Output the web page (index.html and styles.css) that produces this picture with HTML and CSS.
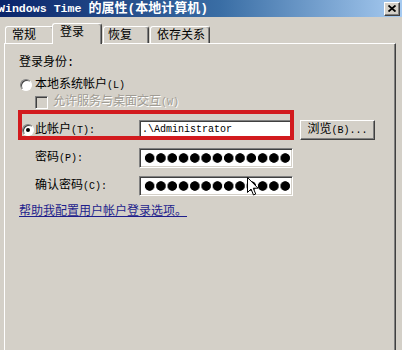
FILE: index.html
```html
<!DOCTYPE html>
<html lang="zh-CN">

<head>
    <meta charset="UTF-8">
    <meta name="viewport" content="width=device-width, initial-scale=1.0">
    <title>Windows Time 的属性(本地计算机)</title>
    <link rel="stylesheet" href="styles.css">
</head>

<body>
    <div class="dialog">
        <div class="title_bar">
            <span class="title_text"><span class="title_latin">Windows Time </span>的属性(本地计算机)</span>
            <button class="close_btn">
                <svg width="8" height="7" viewBox="0 0 8 7">
                    <path d="M0.5 0.5 L7.5 6.5 M7.5 0.5 L0.5 6.5" stroke="#000" stroke-width="1.8" fill="none" />
                </svg>
            </button>
        </div>

        <div class="tab_strip">
            <div class="tab tab_general">常规</div>
            <div class="tab tab_active">登录</div>
            <div class="tab tab_recovery">恢复</div>
            <div class="tab tab_depend">依存关系</div>
        </div>

        <div class="tab_panel">
            <div class="logon_title">登录身份:</div>

            <div class="option_row">
                <span class="radio_cell"><span class="radio"></span></span>
                <span class="option_label">本地系统帐户<span class="latin">(L)</span></span>
            </div>

            <div class="option_row sub_option">
                <span class="checkbox"></span>
                <span class="disabled_label">允许服务与桌面交互<span class="latin">(W)</span></span>
            </div>

            <div class="field_row account_row">
                <span class="radio_cell"><span class="radio radio_checked"></span></span>
                <span class="field_label">此帐户<span class="latin">(T):</span></span>
                <div class="text_field">.\Administrator</div>
                <button class="browse_btn">浏览<span class="latin">(B)...</span></button>
                <!-- red annotation frame drawn over the row -->
                <div class="highlight_box"></div>
            </div>

            <div class="field_row">
                <span class="radio_cell"></span>
                <span class="field_label">密码<span class="latin">(P):</span></span>
                <div class="text_field password_field"></div>
            </div>

            <div class="field_row">
                <span class="radio_cell"></span>
                <span class="field_label">确认密码<span class="latin">(C):</span></span>
                <div class="text_field password_field">
                    <svg class="mouse_cursor" width="12" height="19" viewBox="0 0 12 19">
                        <path d="M0.5 0.5 L0.5 15.5 L4 12 L6.5 18 L8.7 17 L6.3 11.2 L11 11.2 Z" fill="#fff" stroke="#000" stroke-width="1" />
                    </svg>
                </div>
            </div>

            <a class="help_link" href="#">帮助我配置用户帐户登录选项。</a>
        </div>
    </div>
</body>

</html>
```

FILE: styles.css
```css
body,
html {
    margin: 0;
    width: 100%;
    height: 100%;
    overflow: hidden;
    background-color: #d4d0c8;
}

body {
    font-family: "Liberation Mono", "Noto Sans CJK SC", monospace;
    font-size: 12px;
    color: #000000;
}

.dialog {
    width: 402px;
    height: 350px;
    overflow: hidden;
    background-color: #d4d0c8;
}

.latin {
    font-family: "Liberation Mono", monospace;
    font-size: 10px;
}

/* title bar */
.title_bar {
    height: 17px;
    display: flex;
    align-items: center;
    justify-content: space-between;
    background: linear-gradient(to right, #0a246a 0%, #3a6ea5 55%, #a6caf0 100%);
}

.title_text {
    margin-left: -2px;
    color: #ffffff;
    font-weight: bold;
    font-size: 13px;
    line-height: 14px;
    white-space: nowrap;
}

.title_latin {
    font-size: 11.6px;
}

.close_btn {
    width: 16px;
    height: 14px;
    margin-right: 2px;
    padding: 0;
    display: flex;
    align-items: center;
    justify-content: center;
    background-color: #d4d0c8;
    border: 1px solid;
    border-color: #ffffff #404040 #404040 #ffffff;
    box-shadow: inset -1px -1px #808080;
}

/* tabs */
.tab_strip {
    height: 26px;
    display: flex;
    align-items: flex-end;
    padding-left: 5px;
}

.tab {
    box-sizing: border-box;
    height: 17px;
    padding: 1px 0 0 6px;
    line-height: 16px;
    border-top: 1px solid #ffffff;
    border-left: 1px solid #ffffff;
    border-right: 1px solid #404040;
    border-radius: 3px 3px 0 0;
    box-shadow: inset -1px 0 #808080;
    background-color: #d4d0c8;
}

.tab_general {
    width: 49px;
}

.tab_active {
    position: relative;
    z-index: 1;
    width: 50px;
    height: 21px;
    margin: 0 0 -1px -2px;
    padding: 0 0 0 7px;
    line-height: 18px;
}

.tab_recovery {
    width: 46px;
    margin-left: 1px;
    padding-left: 4px;
}

.tab_depend {
    width: 60px;
    margin-left: 1px;
}

/* panel */
.tab_panel {
    width: 392px;
    height: 320px;
    margin-left: 4px;
    box-sizing: border-box;
    padding: 12px 0 0 14px;
    border-top: 1px solid #ffffff;
    border-left: 1px solid #ffffff;
    border-right: 1px solid #404040;
    box-shadow: inset -1px 0 #808080;
    display: flex;
    flex-direction: column;
    align-items: flex-start;
}

.logon_title {
    height: 14px;
    line-height: 14px;
}

.option_row {
    height: 14px;
    margin-top: 8px;
    display: flex;
    align-items: center;
    line-height: 14px;
}

.sub_option {
    margin-top: 3px;
}

.radio_cell {
    width: 16px;
    display: flex;
    align-items: center;
    flex-shrink: 0;
}

.radio {
    box-sizing: border-box;
    width: 12px;
    height: 12px;
    margin-left: 1px;
    border-radius: 50%;
    background-color: #ffffff;
    border: 1px solid;
    border-color: #808080 #ffffff #ffffff #808080;
    box-shadow: inset 1px 1px #404040;
    position: relative;
}

.radio_checked {
    margin-left: 3px;
}

.radio_checked::after {
    content: "";
    position: absolute;
    left: 3px;
    top: 3px;
    width: 4px;
    height: 4px;
    border-radius: 50%;
    background-color: #000000;
}

.checkbox {
    box-sizing: border-box;
    width: 13px;
    height: 13px;
    margin-left: 16px;
    background-color: #d4d0c8;
    border: 1px solid;
    border-color: #808080 #ffffff #ffffff #808080;
    box-shadow: inset 1px 1px #404040;
}

.disabled_label {
    margin-left: 5px;
    color: #a09c94;
    text-shadow: 1px 1px #ffffff;
}

/* account fields */
.field_row {
    position: relative;
    height: 20px;
    margin-top: 8px;
    display: flex;
    align-items: center;
}

.account_row {
    margin-top: 11px;
}

.field_label {
    width: 104px;
    flex-shrink: 0;
    line-height: 14px;
}

.text_field {
    position: relative;
    box-sizing: border-box;
    width: 154px;
    height: 20px;
    padding-left: 2px;
    font-family: "Liberation Mono", monospace;
    font-size: 10px;
    line-height: 18px;
    background-color: #ffffff;
    border: 1px solid;
    border-color: #808080 #ffffff #ffffff #808080;
    box-shadow: inset 1px 1px #404040, inset -1px -1px #d4d0c8;
}

.password_field {
    padding-left: 4px;
    background-image: radial-gradient(circle at center, #000000 4.4px, transparent 5.1px), linear-gradient(#ffffff, #ffffff);
    background-size: 11.3px 12px, auto;
    background-position: 0 center, 0 0;
    background-repeat: repeat-x, no-repeat;
    background-origin: content-box, padding-box;
    background-clip: content-box, padding-box;
}

.mouse_cursor {
    position: absolute;
    left: 107px;
    top: 0px;
}

.browse_btn {
    box-sizing: border-box;
    width: 75px;
    height: 20px;
    margin-left: 7px;
    padding: 0 0 0 0;
    font-family: "Liberation Mono", "Noto Sans CJK SC", monospace;
    font-size: 12px;
    line-height: 16px;
    color: #000000;
    background-color: #d4d0c8;
    border: 1px solid;
    border-color: #ffffff #404040 #404040 #ffffff;
    box-shadow: inset -1px -1px #808080;
}

.highlight_box {
    position: absolute;
    left: -1px;
    top: -10px;
    width: 276px;
    height: 30px;
    box-sizing: border-box;
    border: 4px solid #d21a1e;
}

.help_link {
    margin-top: 9px;
    line-height: 14px;
    color: #1e1e8c;
    text-decoration: underline;
}
```
